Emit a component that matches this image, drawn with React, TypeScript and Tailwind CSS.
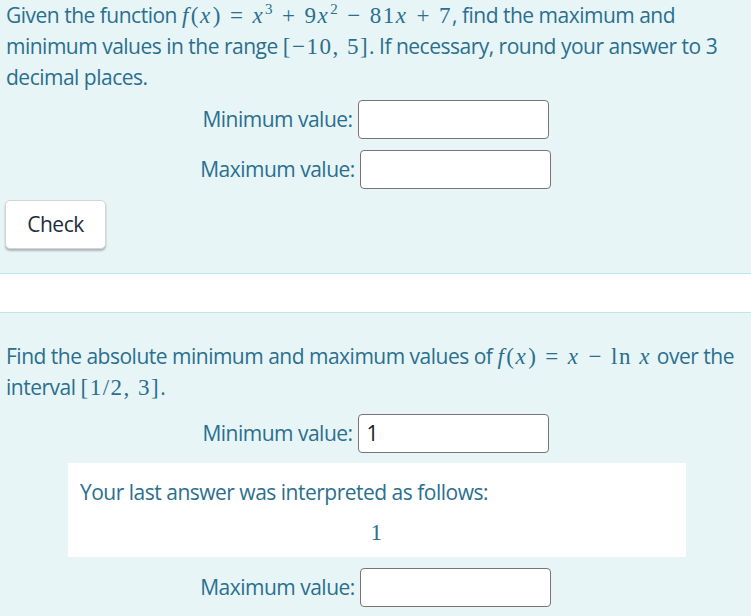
import React from "react";

const M = ({ children }: { children: React.ReactNode }) => (
  <span className="font-['Liberation_Serif',serif] text-[23px] tracking-[1.5px] text-[#2b6f8e] whitespace-nowrap">
    {children}
  </span>
);
const I = ({ children }: { children: React.ReactNode }) => <i className="mr-[1px]">{children}</i>;
const Op = ({ children }: { children: React.ReactNode }) => (
  <span className="inline-block mx-[8px]">{children}</span>
);
const Sup = ({ children }: { children: React.ReactNode }) => (
  <sup className="text-[15px] relative -top-[9px]">{children}</sup>
);

const AnswerRow = ({ label, value }: { label: string; value?: string }) => (
  <div className="flex items-center justify-center gap-[5px]">
    <span>{label}</span>
    <div className="w-[191px] h-[39px] bg-white border border-[#767676] rounded-[4px] flex items-center px-[8px] text-[#1a1a1a]">
      {value}
    </div>
  </div>
);

export default function App() {
  return (
    <div className="w-[751px] h-[616px] overflow-hidden bg-[#e7f5f7] text-[#2b6f8e] text-[21px] leading-[31px] font-['Open_Sans',sans-serif] tracking-[-0.5px]">
      <div className="pb-[24px]">
        <p className="px-[6px]">
          Given the function{" "}
          <M>
            <I>f</I>(<I>x</I>)<Op>=</Op>
            <I>x</I>
            <Sup>3</Sup>
            <Op>+</Op>9<I>x</I>
            <Sup>2</Sup>
            <Op>−</Op>81<I>x</I>
            <Op>+</Op>7
          </M>
          , find the maximum and minimum values in the range <M>[−10, 5]</M>. If necessary, round your
          answer to 3 decimal places.
        </p>
        <div className="mt-[7px] flex flex-col gap-[11px]">
          <AnswerRow label="Minimum value:" />
          <AnswerRow label="Maximum value:" />
        </div>
        <button className="ml-[5px] mt-[11px] w-[101px] h-[49px] bg-white rounded-[5px] border border-[#d4d4d4] shadow-[0_2px_2px_rgba(0,0,0,0.25)] text-[#1d2b3a]">
          Check
        </button>
      </div>
      <div className="h-[40px] bg-white border-y border-[#bfe5ec]" />
      <div className="pt-[28px]">
        <p className="px-[6px]">
          Find the absolute minimum and maximum values of{" "}
          <M>
            <I>f</I>(<I>x</I>)<Op>=</Op>
            <I>x</I>
            <Op>−</Op>ln <I>x</I>
          </M>{" "}
          over the interval <M>[1/2, 3]</M>.
        </p>
        <div className="mt-[11px]">
          <AnswerRow label="Minimum value:" value="1" />
        </div>
        <div className="mx-[68px] mt-[10px] w-[618px] h-[94px] bg-white px-[12px] pt-[14px]">
          <p>Your last answer was interpreted as follows:</p>
          <div className="text-center mt-[9px]">
            <M>1</M>
          </div>
        </div>
        <div className="mt-[11px]">
          <AnswerRow label="Maximum value:" />
        </div>
      </div>
    </div>
  );
}
